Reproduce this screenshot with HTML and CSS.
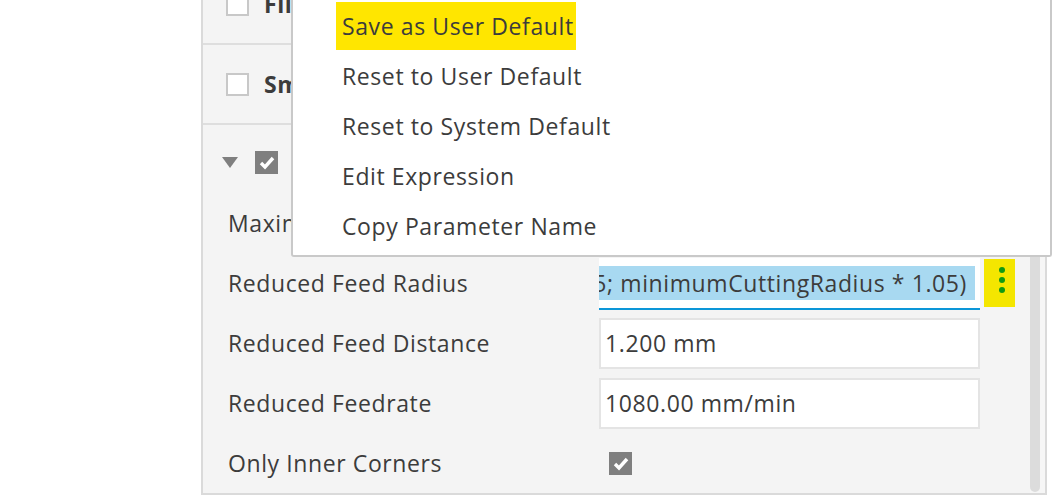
FILE: index.html
```html
<!DOCTYPE html>
<html lang="en">
<head>
    <meta charset="UTF-8">
    <meta name="viewport" content="width=device-width, initial-scale=1.0">
    <title>Feed Optimization</title>
    <link rel="stylesheet" href="styles.css">
</head>
<body>
    <div class="panel">
        <div class="panel-body">
            <div class="group">
                <span class="box"></span>
                <span class="group-title">Filtering</span>
            </div>
            <div class="group">
                <span class="box"></span>
                <span class="group-title">Smoothing</span>
            </div>

            <div class="section">
                <div class="section-head">
                    <span class="caret"></span>
                    <span class="box checked">
                        <svg width="23" height="23" viewBox="0 0 23 23"><polyline points="6,12 10,16 18,7" fill="none" stroke="#fff" stroke-width="3.4"/></svg>
                    </span>
                    <span class="group-title">Feed Optimization</span>
                </div>

                <div class="param">
                    <span class="param-label">Maximum Direction Change</span>
                    <div class="field">90 deg</div>
                </div>
                <div class="param">
                    <span class="param-label">Reduced Feed Radius</span>
                    <div class="field focused">
                        <span class="selected">min(0.5; minimumCuttingRadius * 1.05)</span>
                    </div>
                    <div class="more-btn">
                        <svg width="31" height="48" viewBox="0 0 31 48">
                            <circle cx="18" cy="11" r="3" fill="#129a12"/>
                            <circle cx="18" cy="21" r="3" fill="#129a12"/>
                            <circle cx="18" cy="31" r="3" fill="#129a12"/>
                        </svg>
                    </div>
                </div>
                <div class="param">
                    <span class="param-label">Reduced Feed Distance</span>
                    <div class="field">1.200 mm</div>
                </div>
                <div class="param">
                    <span class="param-label">Reduced Feedrate</span>
                    <div class="field">1080.00 mm/min</div>
                </div>
                <div class="param">
                    <span class="param-label">Only Inner Corners</span>
                    <span class="box checked inline">
                        <svg width="23" height="23" viewBox="0 0 23 23"><polyline points="6,12 10,16 18,7" fill="none" stroke="#fff" stroke-width="3.4"/></svg>
                    </span>
                </div>
            </div>
        </div>
        <div class="scrollbar"><div class="thumb"></div></div>
    </div>

    <!-- parameter context menu -->
    <ul class="menu">
        <li class="menu-item"><span class="marked">Save as User Default</span></li>
        <li class="menu-item">Reset to User Default</li>
        <li class="menu-item">Reset to System Default</li>
        <li class="menu-item">Edit Expression</li>
        <li class="menu-item">Copy Parameter Name</li>
    </ul>
</body>
</html>
```

FILE: styles.css
```css
* {
    box-sizing: border-box;
}
body {
    font-family: "Open Sans", "Noto Sans", sans-serif;
    font-size: 23px;
    letter-spacing: 0.6px;
    background-color: #fff;
    color: #3c3c3c;
    margin: 0;
    padding: 0;
    height: 496px;
    overflow: hidden;
    position: relative;
}
.panel {
    display: flex;
    width: 846px;
    margin: -35px 0 0 201px;
    background: #f4f4f4;
    border-left: 2px solid #dadada;
    border-right: 2px solid #dadada;
    border-bottom: 2px solid #dadada;
}
.panel-body {
    flex: 1;
}
.group {
    display: flex;
    align-items: center;
    height: 80px;
    padding-left: 23px;
    border-bottom: 2px solid #dedede;
}
.box {
    display: block;
    flex: none;
    width: 23px;
    height: 23px;
    background: #fff;
    border: 2px solid #c8c8c8;
}
.box.checked {
    background: #7f7f7f;
    border: none;
}
.box svg {
    display: block;
}
.box.inline {
    margin-left: 10px;
}
.group-title {
    margin-left: 15px;
    font-weight: bold;
    white-space: nowrap;
}
.section-head {
    display: flex;
    align-items: center;
    height: 68px;
    padding: 26px 0 19px 19px;
}
.caret {
    width: 0;
    height: 0;
    margin-right: 17px;
    border-left: 8px solid transparent;
    border-right: 8px solid transparent;
    border-top: 11px solid #7f7f7f;
}
.param {
    display: flex;
    align-items: center;
    height: 60px;
    padding-left: 25px;
}
.param-label {
    flex: none;
    width: 371px;
    white-space: nowrap;
}
.field {
    display: flex;
    align-items: center;
    width: 381px;
    height: 51px;
    padding-left: 4px;
    background: #fff;
    border: 2px solid #e4e4e4;
    white-space: nowrap;
}
.field.focused {
    justify-content: flex-end;
    overflow: hidden;
    padding: 0 5px 0 0;
    border: none;
    border-bottom: 2px solid #0c96d8;
    height: 52px;
    margin-top: 2px;
}
.selected {
    flex: none;
    line-height: 34px;
    padding-right: 8px;
    background: #a8d9f1;
}
.more-btn {
    width: 31px;
    height: 48px;
    margin-left: 4px;
    background: #f4e600;
}
.more-btn svg {
    display: block;
}
.scrollbar {
    display: flex;
    flex-direction: column;
    width: 15px;
    padding-right: 5px;
    background: #f6f6f6;
}
.thumb {
    flex: 1;
    margin: 200px 0 1px;
    background: #dcdcdc;
    border-radius: 5px;
}
.menu {
    position: absolute;
    top: 0;
    left: 291px;
    width: 761px;
    margin: 0;
    padding: 1px 0 4px;
    list-style: none;
    background: #fff;
    border: 2px solid #c9c9c9;
    border-top: none;
    border-radius: 0 0 3px 3px;
}
.menu-item {
    display: flex;
    align-items: center;
    height: 50px;
    padding-left: 49px;
}
.marked {
    display: inline-block;
    line-height: 48px;
    margin-left: -6px;
    padding: 0 2px 0 6px;
    background: #ffe600;
}
```
